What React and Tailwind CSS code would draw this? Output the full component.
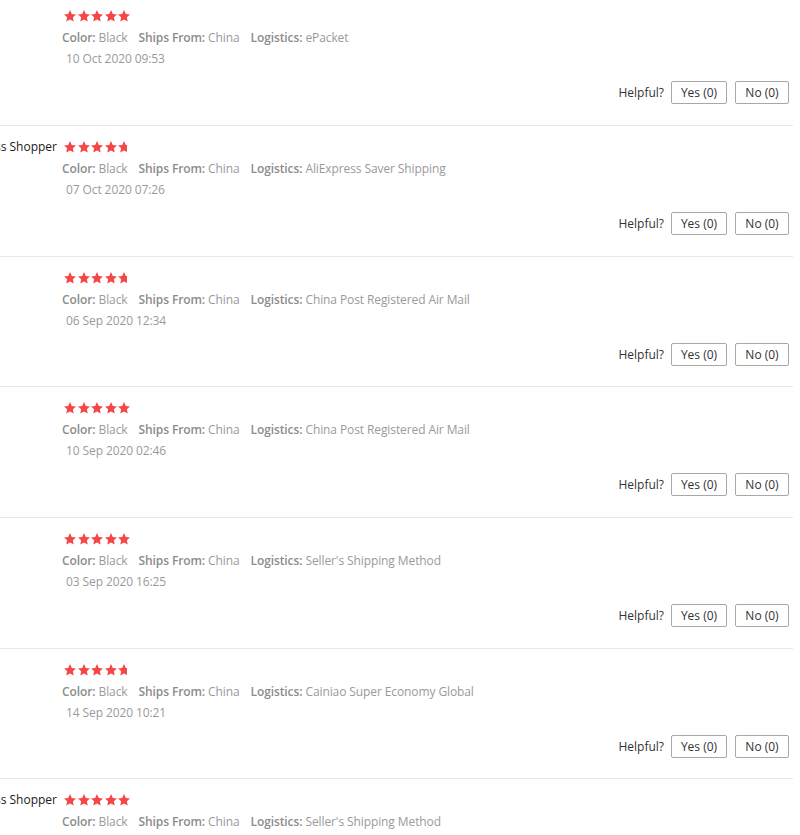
import React from "react";

const STAR = "M12 1.8l3.1 6.6 7.2.9-5.3 5 1.4 7.1L12 17.9l-6.4 3.5 1.4-7.1-5.3-5 7.2-.9z";

function Star() {
  return (
    <svg viewBox="1.6 1.6 20.8 20.8" className="w-[12px] h-[12px] shrink-0" fill="#f44848">
      <path d={STAR} />
    </svg>
  );
}

function Stars({ partial }) {
  return (
    <div className="flex items-center gap-[1.5px] pl-[2px]">
      <Star />
      <Star />
      <Star />
      <Star />
      {partial ? (
        <span className="w-[9px] h-[12px] overflow-hidden flex">
          <Star />
        </span>
      ) : (
        <Star />
      )}
    </div>
  );
}

const reviews = [
  { name: "", partial: false, logistics: "ePacket", date: "10 Oct 2020 09:53", row: "h-[126px] pt-[5px]" },
  { name: "AliExpress Shopper", partial: true, logistics: "AliExpress Saver Shipping", date: "07 Oct 2020 07:26", row: "h-[131px] pt-[10px]" },
  { name: "", partial: true, logistics: "China Post Registered Air Mail", date: "06 Sep 2020 12:34", row: "h-[130px] pt-[10px]" },
  { name: "", partial: false, logistics: "China Post Registered Air Mail", date: "10 Sep 2020 02:46", row: "h-[131px] pt-[10px]" },
  { name: "", partial: false, logistics: "Seller's Shipping Method", date: "03 Sep 2020 16:25", row: "h-[131px] pt-[10px]" },
  { name: "", partial: true, logistics: "Cainiao Super Economy Global", date: "14 Sep 2020 10:21", row: "h-[130px] pt-[10px]" },
  { name: "AliExpress Shopper", partial: false, logistics: "Seller's Shipping Method", date: "01 Sep 2020 08:12", row: "h-[131px] pt-[10px]" },
];

function Review({ r }) {
  return (
    <div className={`flex border-b border-[#e8e8e8] ${r.row}`}>
      <div className="w-[202px] shrink-0 pr-[5px]">
        <div className="h-[21px] leading-[21px] text-right text-[12px] text-[#1a1a1a] whitespace-nowrap">{r.name}</div>
      </div>
      <div className="flex-1 flex flex-col">
        <div className="h-[21px] flex items-center">
          <Stars partial={r.partial} />
        </div>
        <div className="h-[21px] leading-[21px] mt-[1px] text-[12px] tracking-[-0.1px] text-[#9a9a9a] whitespace-nowrap flex gap-[11px]">
          <span>
            <span className="font-semibold text-[#8c8c8c]">Color:</span> Black
          </span>
          <span>
            <span className="font-semibold text-[#8c8c8c]">Ships From:</span> China
          </span>
          <span>
            <span className="font-semibold text-[#8c8c8c]">Logistics:</span> {r.logistics}
          </span>
        </div>
        <div className="h-[21px] leading-[21px] text-[12px] tracking-[-0.1px] text-[#9a9a9a] pl-[4px]">{r.date}</div>
        <div className="mt-[12px] flex items-center justify-end pr-[4px] text-[12px] text-[#333]">
          <span className="mr-[7px]">Helpful?</span>
          <button className="w-[56px] h-[23px] border border-[#a8a8a8] rounded-[2px] bg-white text-[12px] text-[#333] flex items-center justify-center">
            Yes (0)
          </button>
          <button className="ml-[8px] w-[54px] h-[23px] border border-[#a8a8a8] rounded-[2px] bg-white text-[12px] text-[#333] flex items-center justify-center">
            No (0)
          </button>
        </div>
      </div>
    </div>
  );
}

export default function App() {
  return (
    <div className="w-[800px] h-[835px] overflow-hidden bg-white" style={{ fontFamily: '"Open Sans", sans-serif' }}>
      <div className="-ml-[140px] w-[933px]">
        {reviews.map((r, i) => (
          <Review key={i} r={r} />
        ))}
      </div>
    </div>
  );
}
